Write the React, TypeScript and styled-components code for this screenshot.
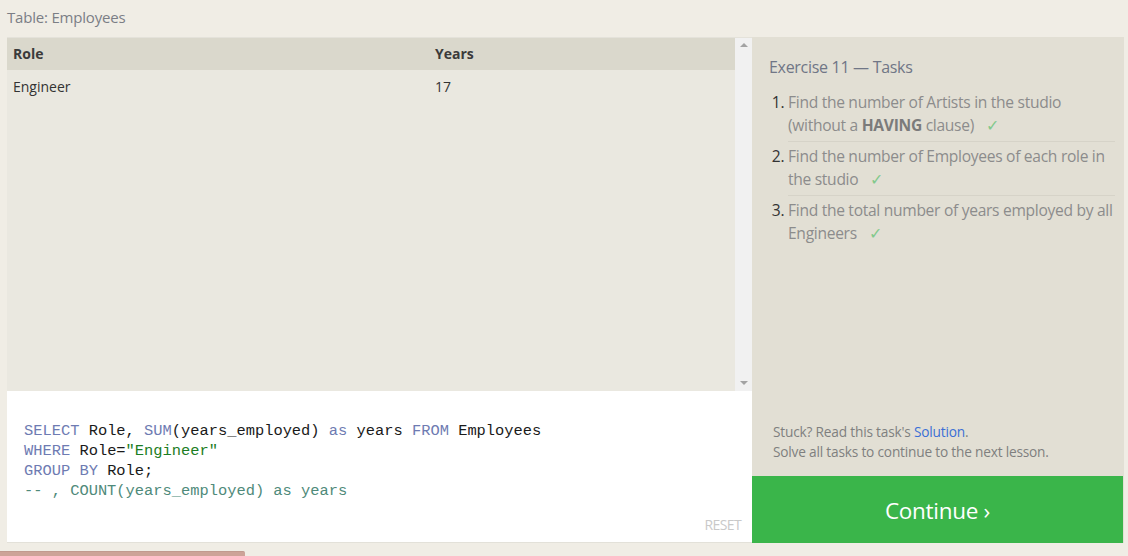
import styled, { createGlobalStyle } from "styled-components";

const GlobalStyle = createGlobalStyle`
  html, body {
    margin: 0;
    padding: 0;
    background-color: #f0ede5;
    font-family: "Open Sans", "Noto Sans", sans-serif;
    overflow: hidden;
  }
`;

const Page = styled.div`
  width: 1128px;
  height: 556px;
  display: flex;
  flex-direction: column;
  box-sizing: border-box;
`;

const TableTitle = styled.div`
  height: 37px;
  padding-left: 7px;
  line-height: 34px;
  font-size: 15px;
  color: #7b7e85;
  letter-spacing: -0.2px;
`;

const Main = styled.div`
  display: flex;
  margin-left: 7px;
  width: 1117px;
  height: 507px;
`;

const LeftColumn = styled.div`
  width: 745px;
  display: flex;
  flex-direction: column;
`;

const ResultArea = styled.div`
  height: 354px;
  display: flex;
  background-color: #eae8e0;
  border-top: 1px solid #e4e2da;
  box-sizing: border-box;
`;

const ResultTable = styled.table`
  flex: 1;
  align-self: flex-start;
  border-collapse: collapse;
  font-size: 14px;
  color: #333;
`;

const HeadCell = styled.th<{ w?: number }>`
  height: 32px;
  padding: 0 6px;
  text-align: left;
  font-weight: 700;
  background-color: #dad8cc;
  color: #3b3b3b;
  width: ${(p) => (p.w ? `${p.w}px` : "auto")};
`;

const Cell = styled.td`
  height: 34px;
  padding: 0 6px;
  color: #333;
`;

const Scrollbar = styled.div`
  width: 17px;
  background-color: #f1f1f1;
  display: flex;
  flex-direction: column;
  justify-content: space-between;
  align-items: center;
  padding: 5px 0 6px;
  box-sizing: border-box;
`;

const Arrow = styled.div<{ down?: boolean }>`
  width: 0;
  height: 0;
  border-left: 4px solid transparent;
  border-right: 4px solid transparent;
  ${(p) => (p.down ? "border-top: 4px solid #a3a3a3;" : "border-bottom: 4px solid #a3a3a3;")}
`;

const Editor = styled.div`
  flex: 1;
  background-color: #fff;
  position: relative;
  padding: 30px 17px 0;
  border-bottom: 1px solid #e3e1d9;
  font-family: "Liberation Mono", "DejaVu Sans Mono", monospace;
  font-size: 15.4px;
  line-height: 20px;
  color: #1a1a1a;
  white-space: pre;
`;

const Kw = styled.span`
  color: #6e7bb2;
`;

const Str = styled.span`
  color: #1c7d24;
`;

const Comment = styled.span`
  color: #4f8a7a;
`;

const ResetButton = styled.div`
  position: absolute;
  right: 11px;
  bottom: 7px;
  font-family: "Open Sans", sans-serif;
  font-size: 14px;
  color: #c9c9c9;
  letter-spacing: -0.6px;
`;

const RightPanel = styled.div`
  width: 372px;
  background-color: #e2dfd4;
  display: flex;
  flex-direction: column;
`;

const TasksTitle = styled.div`
  padding: 19px 0 0 17px;
  font-size: 16px;
  color: #707686;
  letter-spacing: -0.3px;
`;

const TaskList = styled.ol`
  margin: 13px 9px 0 36px;
  padding: 0;
  font-size: 15.6px;
  line-height: 23px;
  color: #8c8c8c;
  letter-spacing: -0.3px;
`;

const TaskItem = styled.li<{ last?: boolean }>`
  padding: 0 0 ${(p) => (p.last ? 0 : 4)}px;
  margin-bottom: 3px;
  border-bottom: ${(p) => (p.last ? "none" : "1px solid #d6d3c8")};
  &::marker {
    color: #333;
  }
`;

const Strong = styled.b`
  color: #7b7b7b;
`;

const Check = styled.span`
  color: #83c98c;
  margin-left: 12px;
`;

const Spacer = styled.div`
  flex: 1;
`;

const Help = styled.div`
  padding: 0 0 14px 21px;
  font-size: 13.7px;
  line-height: 20px;
  color: #7f7f7f;
  letter-spacing: -0.2px;
`;

const Link = styled.span`
  color: #3b6fd6;
`;

const ContinueButton = styled.div`
  height: 67px;
  width: 371px;
  padding-top: 2px;
  box-sizing: border-box;
  background-color: #3ab54a;
  color: #fff;
  font-size: 22.5px;
  display: flex;
  align-items: center;
  justify-content: center;
  letter-spacing: -0.3px;
`;

const Progress = styled.div`
  margin-top: 8px;
  height: 4px;
  width: 245px;
  background-color: #cda398;
  border-top: 1px solid #c19a8f;
  border-radius: 0 2px 0 0;
`;

const tasks = [
  {
    text: (
      <>
        Find the number of Artists in the studio (without a <Strong>HAVING</Strong> clause)
      </>
    ),
  },
  { text: <>Find the number of Employees of each role in the studio</> },
  { text: <>Find the total number of years employed by all Engineers</> },
];

const App = () => {
  return (
    <Page>
      <GlobalStyle />
      <TableTitle>Table: Employees</TableTitle>
      <Main>
        <LeftColumn>
          <ResultArea>
            <ResultTable>
              <thead>
                <tr>
                  <HeadCell w={410}>Role</HeadCell>
                  <HeadCell>Years</HeadCell>
                </tr>
              </thead>
              <tbody>
                <tr>
                  <Cell>Engineer</Cell>
                  <Cell>17</Cell>
                </tr>
              </tbody>
            </ResultTable>
            <Scrollbar>
              <Arrow />
              <Arrow down />
            </Scrollbar>
          </ResultArea>
          <Editor>
            <Kw>SELECT</Kw> Role, <Kw>SUM</Kw>(years_employed) <Kw>as</Kw> years <Kw>FROM</Kw> Employees
            {"\n"}
            <Kw>WHERE</Kw> Role=<Str>"Engineer"</Str>
            {"\n"}
            <Kw>GROUP BY</Kw> Role;
            {"\n"}
            <Comment>-- , COUNT(years_employed) as years</Comment>
            <ResetButton>RESET</ResetButton>
          </Editor>
        </LeftColumn>
        <RightPanel>
          <TasksTitle>Exercise 11 — Tasks</TasksTitle>
          <TaskList>
            {tasks.map((task, index) => (
              <TaskItem key={index} last={index === tasks.length - 1}>
                {task.text}
                <Check>✓</Check>
              </TaskItem>
            ))}
          </TaskList>
          <Spacer />
          <Help>
            Stuck? Read this task's <Link>Solution</Link>.
            <br />
            Solve all tasks to continue to the next lesson.
          </Help>
          <ContinueButton>Continue ›</ContinueButton>
        </RightPanel>
      </Main>
      <Progress />
    </Page>
  );
};

export default App;
